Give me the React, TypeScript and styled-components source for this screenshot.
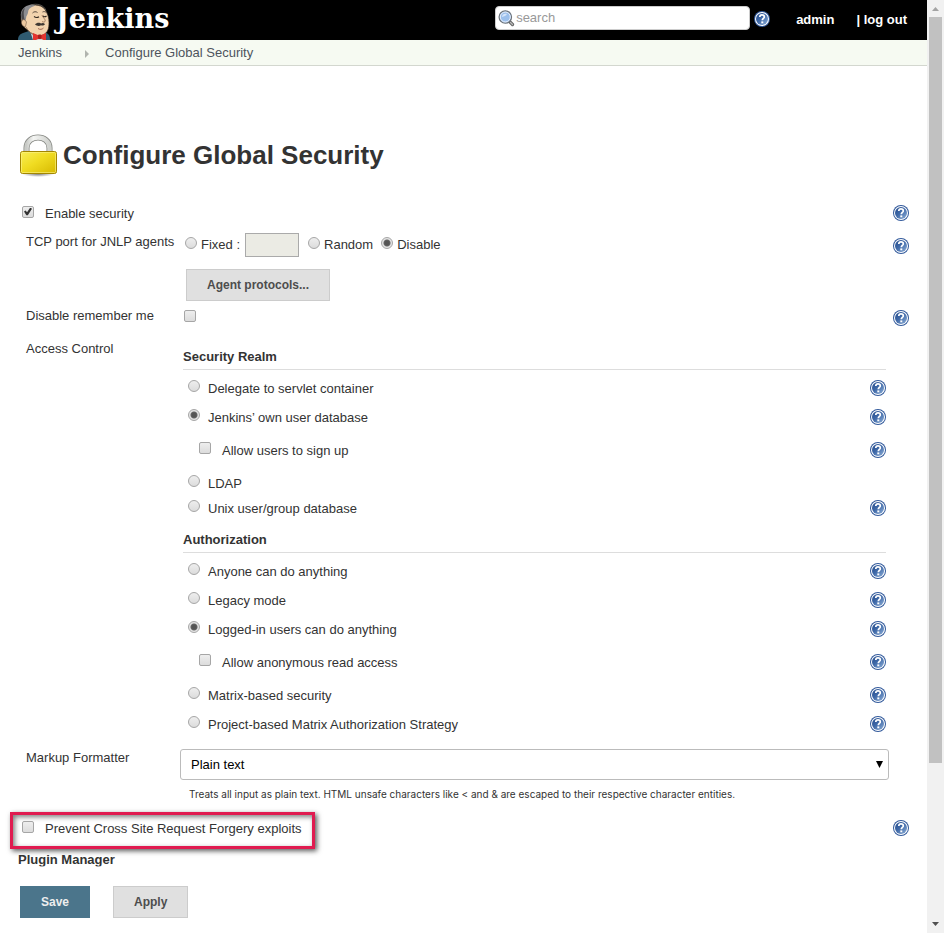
import React from "react";
import styled, { createGlobalStyle, css } from "styled-components";

const GlobalStyle = createGlobalStyle`
  *, *::before, *::after { box-sizing: border-box; }
  body {
    margin: 0;
    background: #fff;
    color: #333;
    font: 13px/20px "Liberation Sans", Arial, Helvetica, sans-serif;
  }
  button, input, select { font: inherit; margin: 0; }
`;

const Frame = styled.div`
  display: flex;
  min-height: 100vh;
`;

const Page = styled.div`
  flex: 1;
  min-width: 0;
`;

const Header = styled.header`
  display: flex;
  align-items: center;
  height: 40px;
  padding: 0 20px 0 18px;
  background: #000;
  color: #fff;
  font-weight: bold;
`;

const Brand = styled.a`
  display: flex;
  align-items: flex-start;
  gap: 4px;
  height: 40px;
  margin-right: auto;
  color: #fff;
  font: bold 27px/38px "DejaVu Serif", Georgia, serif;
  text-decoration: none;
`;

const SearchBox = styled.form`
  display: flex;
  align-items: center;
  gap: 1px;
  width: 255px;
  height: 24px;
  margin: 0 4px 4px 16px;
  padding: 0 2px;
  border: 1px solid #ccc;
  border-radius: 4px;
  background: #fff;
`;

const SearchInput = styled.input`
  flex: 1;
  min-width: 0;
  padding: 0;
  border: 0;
  outline: 0;
  background: none;
  color: #333;
  font-weight: normal;
  &::placeholder { color: #999; opacity: 1; }
`;

const HeaderLink = styled.a`
  color: #fff;
  text-decoration: none;
`;

const HeaderLinks = styled.nav`
  display: flex;
  gap: 22px;
  margin-left: 26px;
`;

const Breadcrumbs = styled.nav`
  display: flex;
  align-items: center;
  height: 26px;
  padding: 0 18px;
  border-bottom: 1px solid #d3d7cf;
  background: #f6faf2;
`;

const Crumb = styled.a`
  color: #4d545d;
  text-decoration: none;
`;

const CrumbArrow = styled.svg`
  margin: 2px 16px 0 23px;
`;

const TitleBar = styled.div`
  display: flex;
  align-items: center;
  gap: 5px;
  padding: 64px 18px 0 19px;
`;

const Title = styled.h1`
  margin: 0;
  font-size: 26px;
  line-height: 40px;
`;

const Form = styled.form`
  padding-top: 22px;
`;

const OptionBlock = styled.div`
  display: flex;
  align-items: center;
  justify-content: space-between;
  height: 24px;
  margin-bottom: 6px;
  padding: 0 18px 0 22px;
`;

const Option = styled.label<{ $gap?: number }>`
  display: flex;
  align-items: center;
  gap: ${(p) => p.$gap ?? 8}px;
`;

const control = css`
  appearance: none;
  flex: none;
  width: 12px;
  height: 12px;
  margin-bottom: 5px;
  border: 1px solid #a6a6a6;
`;

const Checkbox = styled.input.attrs({ type: "checkbox" })`
  ${control}
  display: grid;
  place-items: center;
  border-radius: 2px;
  background: linear-gradient(#eee, #dcdcdc);
  &:checked::after {
    content: "";
    width: 8px;
    height: 8px;
    background: #333;
    clip-path: polygon(0 50%, 20% 38%, 38% 58%, 78% 0, 100% 16%, 48% 98%, 30% 98%);
  }
`;

const Radio = styled.input.attrs({ type: "radio" })`
  ${control}
  border-radius: 50%;
  background: linear-gradient(#eee, #dcdcdc);
  &:checked {
    background: radial-gradient(circle, #555 0 2px, #666 3px, #e4e4e4 4px);
  }
`;

const Field = styled.div<{ $height?: number }>`
  display: grid;
  grid-template-columns: 154px minmax(0, 1fr) 20px;
  min-height: ${(p) => p.$height ?? 0}px;
  padding: 0 18px 0 26px;
`;

const FieldName = styled.div`
  white-space: nowrap;
`;

const HelpCell = styled.div<{ $top: number }>`
  padding: ${(p) => p.$top}px 0 0 4px;
`;

const PortRow = styled.div`
  display: flex;
  align-items: center;
  height: 26px;
  padding-left: 5px;
`;

const PortInput = styled.input`
  width: 54px;
  height: 24px;
  margin: 0 9px 0 5px;
  border: 1px solid #aaa;
  background: #ebebe4;
`;

const PortOption = styled(Option)`
  margin-right: 8px;
`;

const CheckCell = styled.div`
  display: flex;
  align-items: center;
  height: 25px;
  padding-left: 4px;
`;

const Button = styled.button<{ $primary?: boolean }>`
  height: 32px;
  padding: 0 20px;
  border: 1px solid ${(p) => (p.$primary ? "#4b758b" : "#ccc")};
  background: ${(p) => (p.$primary ? "#4b758b" : "#e0e0e0")};
  color: ${(p) => (p.$primary ? "#eee" : "#4d4d4d")};
  font-size: 12px;
  font-weight: bold;
`;

const ProtocolsRow = styled.div`
  padding: 11px 0 0 6px;
`;

const Sections = styled.div`
  padding: 8px 3px 0;
`;

const SectionTitle = styled.h2<{ $spaced?: boolean }>`
  margin: ${(p) => (p.$spaced ? 11 : 0)}px 0 4px;
  padding-bottom: 2px;
  border-bottom: 1px solid #ddd;
  font-size: 13px;
  line-height: 20px;
`;

const Choice = styled.div<{ $height: number; $nested?: boolean }>`
  display: flex;
  align-items: center;
  justify-content: space-between;
  height: ${(p) => p.$height}px;
  padding-left: ${(p) => (p.$nested ? 16 : 5)}px;
`;

const SelectWrap = styled.div`
  position: relative;
  margin-top: 1px;
`;

const Select = styled.select`
  appearance: none;
  display: block;
  width: 100%;
  height: 31px;
  padding: 0 10px;
  border: 1px solid #bbb;
  border-radius: 3px;
  background: #fff;
  color: #000;
`;

const SelectArrow = styled.svg`
  position: absolute;
  right: 6px;
  top: 12px;
  pointer-events: none;
`;

const Hint = styled.p`
  margin: 4px 0 1px 9px;
  font-family: Inter, "Liberation Sans", sans-serif;
  font-size: 10px;
  line-height: 20px;
`;

const HighlightRow = styled.div`
  display: flex;
  justify-content: space-between;
  padding: 7px 18px 0 10px;
`;

const Highlight = styled.div`
  width: 305px;
  height: 37px;
  padding: 4px 0 0 9px;
  border: 3px solid #e01b50;
  box-shadow: 2px 2px 5px rgba(0, 0, 0, 0.65), inset 2px 2px 5px rgba(0, 0, 0, 0.5);
`;

const PluginTitle = styled.h2`
  margin: 1px 18px 0;
  font-size: 13px;
  line-height: 20px;
`;

const Actions = styled.div`
  position: relative;
  display: flex;
  gap: 23px;
  margin-top: -4px;
  padding: 20px 20px 0;
  background: rgba(255, 255, 255, 0.6);
`;

const Scrollbar = styled.div`
  display: flex;
  flex-direction: column;
  width: 17px;
  background: #f1f1f1;
`;

const Track = styled.div`
  flex: 1;
  padding: 0 2px;
`;

const Thumb = styled.div`
  height: 83%;
  background: #c1c1c1;
`;

const HelpButton = styled.button`
  display: block;
  flex: none;
  width: 16px;
  height: 16px;
  margin-bottom: 2px;
  padding: 0;
  border: 0;
  background: none;
  cursor: pointer;
  svg { display: block; }
`;

function Help({ topic }: { topic: string }) {
  return (
    <HelpButton type="button" aria-label={`Help for feature: ${topic}`}>
      <svg width="16" height="16" viewBox="0 0 16 16">
        <defs>
          <linearGradient id="helpFill" x1="0" y1="0" x2="1" y2="1">
            <stop offset="0" stopColor="#254c8c" />
            <stop offset="0.45" stopColor="#3f69a8" />
            <stop offset="1" stopColor="#8fb0d8" />
          </linearGradient>
        </defs>
        <circle cx="8" cy="8" r="8" fill="#31599b" />
        <circle cx="8" cy="8" r="7" fill="#fff" />
        <circle cx="8" cy="8" r="6" fill="url(#helpFill)" />
        <path d="M5.8 6.1C5.8 4.6 6.700 3.900 8 3.900s2.300.8 2.300 2c0 1.500-2 1.700-2 3.400" fill="none" stroke="#fff" strokeWidth="1.7" />
        <rect x="7.3" y="10.4" width="2" height="1.9" fill="#fff" />
      </svg>
    </HelpButton>
  );
}

function Butler() {
  return (
    <svg width="34" height="40" viewBox="0 0 34 40">
      <path d="M0 40c0-4 2-6 5-7l6-2 15 1c4 1 6 3 6 8z" fill="#2f5a70" />
      <path d="M12 31l3 9h13l-1-7z" fill="#c9d3d8" />
      <path d="M6 27C2 22 2 13 7 8.500c5-4.500 16-5 20 1 3 4 4 9 4 13 0 6-1 10-6 12.500-4 2-11 0-14-4l-4-3z" fill="#f2d3ae" stroke="#33281f" strokeWidth="0.7" />
      <path d="M3 17C2 10 6 6 13 4.500c4-.3 5 1 2 2-3 1-5 3-5 6 0 2-2 3-2 6l-1 4.500c-2-1-3.500-3-4-6z" fill="#8b8c90" />
      <path d="M3.500 18C3 13 4 10 7 8c-2 4-1 6-1 9l1 5c-2 0-3-2-3.500-4z" fill="#4b4a4d" />
      <path d="M13 5c6-2 13 0 15 5.500" fill="none" stroke="#6f6963" strokeWidth="0.8" />
      <path d="M4.500 20c-2.500 3 0 7 3 6.500l1-4.500c-1-2-3-3-4-2z" fill="#ecc8a0" stroke="#5b4636" strokeWidth="0.5" />
      <path d="M8 27c2 4 5 7 10 8" fill="none" stroke="#9c7d61" strokeWidth="0.9" />
      <path d="M14.500 13c1.500-1.600 3.500-1.600 5-.5M24.500 12c1.500-.8 3-.3 4 .7" fill="none" stroke="#4a3d33" strokeWidth="0.9" />
      <path d="M16 16.500c1.500 1.200 3.500 1.200 5 .2M25 16c1 .9 2.500.9 3.500 0" fill="none" stroke="#33281f" strokeWidth="1.1" />
      <path d="M24 15c1 3 4 4.500 3 6.500-.8.9-2 .5-3 0" fill="none" stroke="#8e674b" strokeWidth="0.8" />
      <path d="M17 24.500c1.500-2.200 5-2.200 6-.9 1.500-1 3-.6 4 .6-1 1.500-3 1.600-4 1-1.500 1.200-4.500.8-6-.7z" fill="#3f3833" />
      <path d="M20 28.500c2 1.400 4 1 5.500-.5" fill="none" stroke="#8a4b3c" strokeWidth="0.8" />
      <path d="M15 33l6.500 2.700L28 33v7h-2.500l-3.500-2-4 2h-3z" fill="#e3342f" />
      <rect x="20" y="34.500" width="3.500" height="4.500" rx="1" fill="#a81f1c" />
    </svg>
  );
}

const PadlockDrawing = styled.svg`
  margin-top: 4px;
`;

function Padlock() {
  return (
    <PadlockDrawing width="39" height="46" viewBox="0 0 39 46">
      <defs>
        <linearGradient id="lockBody" x1="0" y1="0" x2="1" y2="1">
          <stop offset="0" stopColor="#f8ee58" />
          <stop offset="0.45" stopColor="#f0dc22" />
          <stop offset="1" stopColor="#d6b800" />
        </linearGradient>
        <linearGradient id="lockShackle" x1="0" y1="0" x2="1" y2="0">
          <stop offset="0" stopColor="#c9cbc7" />
          <stop offset="0.3" stopColor="#f4f5f3" />
          <stop offset="1" stopColor="#cfd1cd" />
        </linearGradient>
        <radialGradient id="lockShadow">
          <stop offset="0" stopColor="#000" stopOpacity="0.5" />
          <stop offset="1" stopColor="#000" stopOpacity="0" />
        </radialGradient>
      </defs>
      <ellipse cx="19" cy="40" rx="16" ry="3" fill="url(#lockShadow)" />
      <path d="M7.500 20v-6c0-14 23-14 23 0v6" fill="none" stroke="#858782" strokeWidth="6" />
      <path d="M7.500 20v-6c0-14 23-14 23 0v6" fill="none" stroke="url(#lockShackle)" strokeWidth="4.500" />
      <rect x="1.500" y="17.500" width="36" height="22" rx="2" fill="url(#lockBody)" stroke="#a38600" />
      <rect x="2.500" y="18.500" width="34" height="20" rx="1" fill="none" stroke="#fbf38a" strokeOpacity="0.6" />
    </PadlockDrawing>
  );
}

function Magnifier() {
  return (
    <svg width="17" height="17" viewBox="0 0 17 17" aria-hidden="true">
      <path d="M11.500 11.500l3 3" stroke="#666" strokeWidth="3.200" strokeLinecap="round" />
      <path d="M12.500 12.500l2 2" stroke="#bbb" strokeWidth="1.200" strokeLinecap="round" />
      <circle cx="7.300" cy="7" r="6.200" fill="#9fc1ee" stroke="#6d7379" strokeWidth="1.300" />
      <circle cx="7.300" cy="7" r="5" fill="#9cc0ec" stroke="#eef3fa" strokeWidth="0.900" />
      <path d="M4 7c0-3 3-4 5-3-1 2-3 2-5 3z" fill="#d5e5fa" />
    </svg>
  );
}

type ChoiceItem = { label: string; checked?: boolean; nested?: boolean; help?: boolean; height?: number };

const realms: ChoiceItem[] = [
  { label: "Delegate to servlet container" },
  { label: "Jenkins’ own user database", checked: true },
  { label: "Allow users to sign up", nested: true },
  { label: "LDAP", help: false },
  { label: "Unix user/group database", height: 21 },
];

const strategies: ChoiceItem[] = [
  { label: "Anyone can do anything" },
  { label: "Legacy mode" },
  { label: "Logged-in users can do anything", checked: true },
  { label: "Allow anonymous read access", nested: true },
  { label: "Matrix-based security" },
  { label: "Project-based Matrix Authorization Strategy" },
];

function Choices({ name, items }: { name: string; items: ChoiceItem[] }) {
  return (
    <>
      {items.map(({ label, checked, nested, help = true, height }) => (
        <Choice key={label} $nested={nested} $height={height ?? (nested ? 37 : 29)}>
          <Option $gap={nested ? 11 : 8}>
            {nested ? <Checkbox /> : <Radio name={name} defaultChecked={checked} />}
            {label}
          </Option>
          {help && <Help topic={label} />}
        </Choice>
      ))}
    </>
  );
}

export default function App() {
  return (
    <Frame>
      <GlobalStyle />
      <Page>
        <Header>
          <Brand href="#">
            <Butler />
            Jenkins
          </Brand>
          <SearchBox role="search">
            <Magnifier />
            <SearchInput type="text" placeholder="search" aria-label="search" />
          </SearchBox>
          <Help topic="search" />
          <HeaderLinks>
            <HeaderLink href="#">admin</HeaderLink>
            <span>
              | <HeaderLink href="#">log out</HeaderLink>
            </span>
          </HeaderLinks>
        </Header>
        <Breadcrumbs aria-label="Breadcrumb">
          <Crumb href="#">Jenkins</Crumb>
          <CrumbArrow width="4" height="8" viewBox="0 0 4 8" aria-hidden="true">
            <path d="M0 0l4 4-4 4z" fill="#b0b4ae" />
          </CrumbArrow>
          <Crumb href="#">Configure Global Security</Crumb>
        </Breadcrumbs>
        <main>
          <TitleBar>
            <Padlock />
            <Title>Configure Global Security</Title>
          </TitleBar>
          <Form onSubmit={(e) => e.preventDefault()}>
            <OptionBlock>
              <Option $gap={11}>
                <Checkbox defaultChecked />
                Enable security
              </Option>
              <Help topic="Enable security" />
            </OptionBlock>

            <Field $height={74}>
              <FieldName>TCP port for JNLP agents</FieldName>
              <div>
                <PortRow>
                  <Option $gap={4}>
                    <Radio name="port" />
                    Fixed :
                  </Option>
                  <PortInput type="text" disabled aria-label="Fixed port" />
                  <PortOption $gap={4}>
                    <Radio name="port" />
                    Random
                  </PortOption>
                  <Option $gap={4}>
                    <Radio name="port" defaultChecked />
                    Disable
                  </Option>
                </PortRow>
                <ProtocolsRow>
                  <Button type="button">Agent protocols...</Button>
                </ProtocolsRow>
              </div>
              <HelpCell $top={6}>
                <Help topic="TCP port for JNLP agents" />
              </HelpCell>
            </Field>

            <Field $height={33}>
              <FieldName>
                <label htmlFor="remember">Disable remember me</label>
              </FieldName>
              <CheckCell>
                <Checkbox id="remember" />
              </CheckCell>
              <HelpCell $top={4}>
                <Help topic="Disable remember me" />
              </HelpCell>
            </Field>

            <Field $height={409}>
              <FieldName>Access Control</FieldName>
              <Sections>
                <SectionTitle>Security Realm</SectionTitle>
                <Choices name="realm" items={realms} />
                <SectionTitle $spaced>Authorization</SectionTitle>
                <Choices name="authorization" items={strategies} />
              </Sections>
            </Field>

            <Field>
              <FieldName>
                <label htmlFor="markup">Markup Formatter</label>
              </FieldName>
              <div>
                <SelectWrap>
                  <Select id="markup" defaultValue="plain">
                    <option value="plain">Plain text</option>
                  </Select>
                  <SelectArrow width="7" height="7" viewBox="0 0 7 7" aria-hidden="true">
                    <path d="M0 0h7L3.500 7z" fill="#000" />
                  </SelectArrow>
                </SelectWrap>
                <Hint>
                  Treats all input as plain text. HTML unsafe characters like &lt; and &amp; are escaped to their
                  respective character entities.
                </Hint>
              </div>
            </Field>

            <HighlightRow>
              <Highlight>
                <Option $gap={11}>
                  <Checkbox />
                  Prevent Cross Site Request Forgery exploits
                </Option>
              </Highlight>
              <HelpCell $top={8}>
                <Help topic="Prevent Cross Site Request Forgery exploits" />
              </HelpCell>
            </HighlightRow>

            <PluginTitle>Plugin Manager</PluginTitle>
            <Actions>
              <Button type="submit" $primary>
                Save
              </Button>
              <Button type="button">Apply</Button>
            </Actions>
          </Form>
        </main>
      </Page>
      <Scrollbar aria-hidden="true">
        <svg width="17" height="17" viewBox="0 0 17 17">
          <path d="M5 11h7L8.500 7z" fill="#a3a3a3" />
        </svg>
        <Track>
          <Thumb />
        </Track>
        <svg width="17" height="17" viewBox="0 0 17 17">
          <path d="M5 6h7l-3.500 4z" fill="#505050" />
        </svg>
      </Scrollbar>
    </Frame>
  );
}
